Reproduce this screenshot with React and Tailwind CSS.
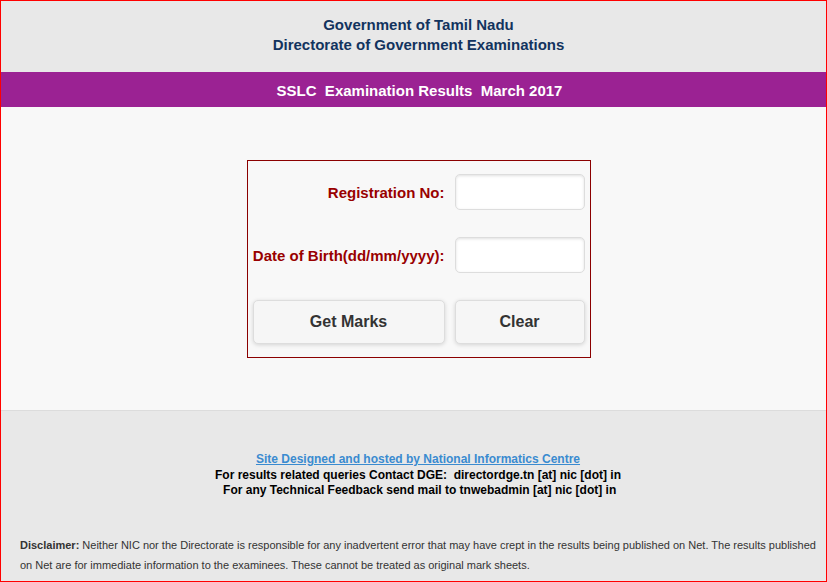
import React, { useState } from "react";

const App = () => {
  const [regNo, setRegNo] = useState("");
  const [dob, setDob] = useState("");

  const clearForm = () => {
    setRegNo("");
    setDob("");
  };

  return (
    <div
      className="flex flex-col h-[582px] w-full border border-[#ff0000] bg-[#f8f8f8]"
      style={{ fontFamily: '"Liberation Sans", Arial, sans-serif' }}
    >
      {/* header */}
      <div className="h-[71px] bg-[#e8e8e8] flex flex-col items-center pt-[14px] pl-[10px] text-[15px] font-bold leading-[20px] text-[#12335e]">
        <p>Government of Tamil Nadu</p>
        <p>Directorate of Government Examinations</p>
      </div>
      <div className="h-[35px] bg-[#9b2293] flex items-center justify-center pt-[3px] pl-[12px] text-white text-[15px] font-bold whitespace-pre">
        SSLC  Examination Results  March 2017
      </div>

      {/* form */}
      <div className="flex-1 flex justify-center pt-[53px] pl-[10px]">
        <div className="w-[344px] h-[198px] border border-[#8b0000] px-[5px] pt-[13px]">
          <div className="grid grid-cols-[192px_130px] gap-x-[10px] gap-y-[27px] items-center">
            <label className="text-right pt-[2px] text-[15px] font-bold text-[#990000]">
              Registration No:
            </label>
            <input
              value={regNo}
              onChange={(e) => setRegNo(e.target.value)}
              className="h-[36px] rounded-[5px] border border-[#dddddd] bg-white shadow-[inset_0_1px_3px_rgba(0,0,0,0.12)] outline-none px-2"
            />
            <label className="text-right pt-[2px] text-[15px] font-bold text-[#990000]">
              Date of Birth(dd/mm/yyyy):
            </label>
            <input
              value={dob}
              onChange={(e) => setDob(e.target.value)}
              className="h-[36px] rounded-[5px] border border-[#dddddd] bg-white shadow-[inset_0_1px_3px_rgba(0,0,0,0.12)] outline-none px-2"
            />
            <button className="h-[44px] rounded-[5px] border border-[#dddddd] bg-[#f6f6f6] shadow-[0_1px_4px_rgba(0,0,0,0.15)] text-[16px] font-bold text-[#333333]">
              Get Marks
            </button>
            <button
              onClick={clearForm}
              className="h-[44px] rounded-[5px] border border-[#dddddd] bg-[#f6f6f6] shadow-[0_1px_4px_rgba(0,0,0,0.15)] text-[16px] font-bold text-[#333333]"
            >
              Clear
            </button>
          </div>
        </div>
      </div>

      {/* footer */}
      <div className="h-[171px] bg-[#e8e8e8] border-t border-[#dcdcdc] flex flex-col">
        <div className="flex flex-col items-center pt-[41px] pl-[9px] text-[12px] font-bold leading-[15.5px] text-black">
          <a href="#" className="text-[#3a8bd0] underline">
            Site Designed and hosted by National Informatics Centre
          </a>
          <p className="whitespace-pre">For results related queries Contact DGE:  directordge.tn [at] nic [dot] in</p>
          <p className="whitespace-pre"> For any Technical Feedback send mail to tnwebadmin [at] nic [dot] in</p>
        </div>
        <p className="mt-auto pl-[19px] pr-[6px] pb-[6px] text-[11px] leading-[19.5px] text-[#333333]">
          <span className="font-bold">Disclaimer:</span> Neither NIC nor the Directorate is
          responsible for any inadvertent error that may have crept in the results being
          published on Net. The results published on Net are for immediate information to the
          examinees. These cannot be treated as original mark sheets.
        </p>
      </div>
    </div>
  );
};

export default App;
